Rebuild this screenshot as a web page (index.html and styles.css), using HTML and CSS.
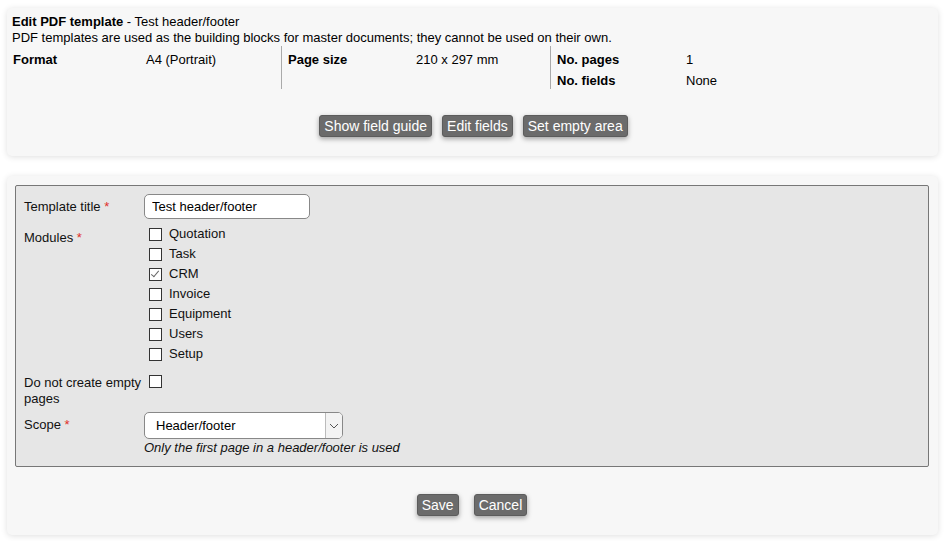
FILE: index.html
```html
<!DOCTYPE html>
<html>
<head>
<meta charset="utf-8">
<link rel="stylesheet" href="styles.css">
</head>
<body>
<div class="panel top-panel">
  <div class="title"><b>Edit PDF template</b> - Test header/footer</div>
  <div class="desc">PDF templates are used as the building blocks for master documents; they cannot be used on their own.</div>
  <div class="info">
    <div class="col col1">
      <div class="irow"><span class="ilabel">Format</span><span class="ival">A4 (Portrait)</span></div>
    </div>
    <div class="col col2">
      <div class="irow"><span class="ilabel">Page size</span><span class="ival">210 x 297 mm</span></div>
    </div>
    <div class="col col3">
      <div class="irow"><span class="ilabel">No. pages</span><span class="ival">1</span></div>
      <div class="irow"><span class="ilabel">No. fields</span><span class="ival">None</span></div>
    </div>
  </div>
  <div class="actions top-actions">
    <button class="btn">Show field guide</button>
    <button class="btn">Edit fields</button>
    <button class="btn">Set empty area</button>
  </div>
</div>

<div class="panel form-panel">
  <div class="fieldset">
    <div class="frow">
      <div class="flabel">Template title <span class="req">*</span></div>
      <div class="fval"><input class="text" type="text" value="Test header/footer"></div>
    </div>
    <div class="frow modules-row">
      <div class="flabel">Modules <span class="req">*</span></div>
      <div class="fval checks">
        <label class="chk"><input type="checkbox"><span>Quotation</span></label>
        <label class="chk"><input type="checkbox"><span>Task</span></label>
        <label class="chk"><input type="checkbox" checked><span>CRM</span></label>
        <label class="chk"><input type="checkbox"><span>Invoice</span></label>
        <label class="chk"><input type="checkbox"><span>Equipment</span></label>
        <label class="chk"><input type="checkbox"><span>Users</span></label>
        <label class="chk"><input type="checkbox"><span>Setup</span></label>
      </div>
    </div>
    <div class="frow">
      <div class="flabel wrap">Do not create empty pages</div>
      <div class="fval"><input class="single" type="checkbox"></div>
    </div>
    <div class="frow scope-row">
      <div class="flabel">Scope <span class="req">*</span></div>
      <div class="fval">
        <div class="selectwrap">
          <select class="select"><option>Header/footer</option></select>
          <span class="arrow"><svg width="10" height="6" viewBox="0 0 10 6"><path d="M1 1 L5 5 L9 1" fill="none" stroke="#555" stroke-width="1"/></svg></span>
        </div>
        <div class="hint">Only the first page in a header/footer is used</div>
      </div>
    </div>
  </div>
  <div class="actions bottom-actions">
    <button class="btn">Save</button>
    <button class="btn">Cancel</button>
  </div>
</div>
</body>
</html>
```

FILE: styles.css
```css
html, body {
  margin: 0;
  padding: 0;
  background: #ffffff;
}
body {
  padding: 8px 7px;
  font-family: "Liberation Sans", Arial, sans-serif;
  font-size: 13px;
  line-height: 16px;
  color: #000;
}
.panel {
  background: #f7f7f7;
  border-radius: 5px;
  box-shadow: 0 1px 6px rgba(0, 0, 0, 0.13);
}
.top-panel {
  padding: 6px 5px 19px 5px;
}
.title b {
  font-weight: bold;
}
.info {
  display: flex;
}
.col {
  display: flex;
  flex-direction: column;
  gap: 5px;
  padding-top: 6px;
  height: 37px;
}
.col1 {
  width: 268px;
  padding-left: 1px;
}
.col2, .col3 {
  border-left: 1px solid #aaa;
  padding-left: 6px;
  width: 262px;
}
.irow {
  display: flex;
}
.ilabel {
  font-weight: bold;
}
.col1 .ilabel { width: 133px; }
.col2 .ilabel { width: 128px; }
.col3 .ilabel { width: 129px; }

.actions {
  display: flex;
  justify-content: center;
}
.top-actions {
  margin-top: 26px;
  gap: 10px;
  padding-left: 2px;
}
.btn {
  font-family: "Liberation Sans", Arial, sans-serif;
  font-size: 14px;
  line-height: 16px;
  color: #fff;
  background: #6b6b6b;
  border: 1px solid #5c5c5c;
  border-radius: 3px;
  padding: 2px 4px;
  height: 22px;
  box-shadow: 0 2px 5px rgba(0, 0, 0, 0.35);
  cursor: pointer;
}

.form-panel {
  margin-top: 20px;
  padding: 9px 9px 19px 8px;
}
.fieldset {
  background: #e6e6e6;
  border: 1px solid #777;
  border-radius: 2px;
  padding: 8px 8px 10px 8px;
  display: flex;
  flex-direction: column;
  gap: 6px;
}
.frow {
  display: flex;
}
.modules-row {
  margin-top: -1px;
}
.modules-row .flabel {
  padding-top: 6px;
}
.scope-row {
  margin-top: -1px;
}
.flabel {
  width: 120px;
  flex: none;
  padding-top: 5px;
  color: #111;
}
.req {
  color: #e0302a;
}
.text {
  box-sizing: border-box;
  width: 166px;
  height: 25px;
  border: 1px solid #888;
  border-radius: 5px;
  background: #fff;
  padding: 0 7px;
  font-family: "Liberation Sans", Arial, sans-serif;
  font-size: 13px;
  color: #000;
  margin: 0;
  outline: none;
}
.checks {
  display: flex;
  flex-direction: column;
}
.chk {
  display: flex;
  align-items: center;
  height: 20px;
  color: #111;
}
input[type="checkbox"] {
  appearance: none;
  -webkit-appearance: none;
  box-sizing: border-box;
  width: 13px;
  height: 13px;
  border: 1px solid #333;
  background: #fff;
  margin: 0 7px 0 5px;
  position: relative;
  flex: none;
}
input[type="checkbox"]:checked::after {
  content: "";
  position: absolute;
  left: 3px;
  top: 0px;
  width: 3px;
  height: 7px;
  border-right: 1px solid #666;
  border-bottom: 1px solid #666;
  transform: rotate(40deg);
}
input.single {
  margin-top: 5px;
  display: block;
}
.selectwrap {
  position: relative;
  width: 199px;
  height: 27px;
}
.select {
  appearance: none;
  -webkit-appearance: none;
  box-sizing: border-box;
  width: 199px;
  height: 27px;
  border: 1px solid #888;
  border-radius: 5px;
  background: #fff;
  padding: 0 0 0 11px;
  font-family: "Liberation Sans", Arial, sans-serif;
  font-size: 13px;
  color: #000;
  margin: 0;
  outline: none;
}
.arrow {
  position: absolute;
  right: 1px;
  top: 1px;
  width: 16px;
  height: 25px;
  border-left: 1px solid #bbb;
  background: #f3f3f3;
  border-radius: 0 4px 4px 0;
  display: flex;
  align-items: center;
  justify-content: center;
}
.hint {
  font-style: italic;
  color: #111;
  margin-top: 1px;
}
.bottom-actions {
  margin-top: 27px;
  gap: 15px;
}
```
